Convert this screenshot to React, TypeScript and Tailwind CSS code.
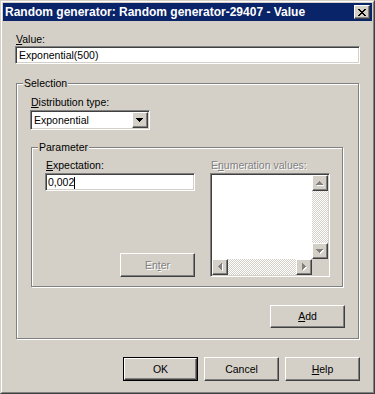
import React from "react";

const raised =
  "border border-t-white border-l-white border-r-[#404040] border-b-[#404040] bg-[#d4d0c8] shadow-[inset_-1px_-1px_0_#808080]";
const sunken =
  "border border-t-[#808080] border-l-[#808080] border-r-white border-b-white bg-white p-[1px] shadow-[inset_1px_1px_0_#404040,inset_-1px_-1px_0_#d4d0c8]";
const checker =
  "bg-[image:repeating-conic-gradient(#ffffff_0%_25%,#d4d0c8_0%_50%)] bg-[length:2px_2px]";
const dim = "text-[#808080] [text-shadow:1px_1px_0_#ffffff]";
const group =
  "flex flex-col border border-[#808080] shadow-[1px_1px_0_#ffffff,inset_1px_1px_0_#ffffff]";

type Dir = "up" | "down" | "left" | "right";

// 7px classic arrow glyph drawn pixel by pixel
function Arrow({ dir, color }: { dir: Dir; color: string }) {
  const rects: [number, number, number, number][] = [];
  for (let i = 0; i < 4; i++) {
    if (dir === "up") rects.push([3 - i, i, 2 * i + 1, 1]);
    if (dir === "down") rects.push([i, i, 7 - 2 * i, 1]);
    if (dir === "left") rects.push([i, 3 - i, 1, 2 * i + 1]);
    if (dir === "right") rects.push([i, i, 1, 7 - 2 * i]);
  }
  const w = dir === "up" || dir === "down" ? 7 : 4;
  const h = dir === "up" || dir === "down" ? 4 : 7;
  return (
    <svg width={w + 1} height={h + 1} shapeRendering="crispEdges">
      {color !== "#000000" &&
        rects.map((r, i) => (
          <rect key={"s" + i} x={r[0] + 1} y={r[1] + 1} width={r[2]} height={r[3]} fill="#ffffff" />
        ))}
      {rects.map((r, i) => (
        <rect key={i} x={r[0]} y={r[1]} width={r[2]} height={r[3]} fill={color} />
      ))}
    </svg>
  );
}

function ScrollBtn({ dir }: { dir: Dir }) {
  return (
    <div className={`flex h-[16px] w-[16px] shrink-0 items-center justify-center ${raised}`}>
      <Arrow dir={dir} color="#808080" />
    </div>
  );
}

function CloseGlyph() {
  const rows = ["11000011", "01100110", "00111100", "00011000", "00111100", "01100110", "11000011"];
  return (
    <svg width="8" height="7" shapeRendering="crispEdges">
      {rows.flatMap((row, y) =>
        row.split("").map((c, x) => (c === "1" ? <rect key={`${x}-${y}`} x={x} y={y} width="1" height="1" fill="#000" /> : null)),
      )}
    </svg>
  );
}

function Button({ children, isDefault }: { children: React.ReactNode; isDefault?: boolean }) {
  if (isDefault) {
    return (
      <div className="h-[24px] w-[75px] border border-black">
        <div className={`flex h-full w-full items-center justify-center ${raised}`}>{children}</div>
      </div>
    );
  }
  return <div className={`flex h-[24px] w-[75px] items-center justify-center ${raised}`}>{children}</div>;
}

export default function App() {
  return (
    <div className="h-[394px] w-[375px] border border-t-[#d4d0c8] border-l-[#d4d0c8] border-r-[#404040] border-b-[#404040] bg-[#d4d0c8] font-['Liberation_Sans',Arial,sans-serif] text-[10.5px] leading-[13px] text-black">
      <div className="flex h-full flex-col border border-t-white border-l-white border-r-[#808080] border-b-[#808080] p-[1px]">
        {/* caption */}
        <div className="flex h-[18px] shrink-0 items-center justify-between bg-[#0a246a] pl-[2px] pr-[2px]">
          <span className="text-[12px] font-bold leading-[13px] text-white">
            Random generator: Random generator-29407 - Value
          </span>
          <div className={`flex h-[14px] w-[16px] items-center justify-center ${raised}`}>
            <CloseGlyph />
          </div>
        </div>

        <div className="flex flex-1 flex-col px-[12px] pt-[12px]">
          <div className="h-[13px] pl-[1px]">
            <u>V</u>alue:
          </div>
          <div className={`h-[18px] w-full ${sunken}`}>
            <div className="pl-[2px] pt-[1px]">Exponential(500)</div>
          </div>

          {/* Selection */}
          <div className={`ml-[1px] mt-[19px] w-[343px] px-[13px] pb-[10px] ${group}`}>
            <div className="-ml-[7px] -mt-[7px] h-[13px] w-fit bg-[#d4d0c8] px-[1px]">Selection</div>
            <div className="mt-[6px] h-[13px] pl-[1px]">
              <u>D</u>istribution type:
            </div>
            <div className={`mt-[1px] flex h-[20px] w-[120px] ${sunken}`}>
              <div className="flex-1 pl-[2px] pt-[2px]">Exponential</div>
              <div className={`flex h-[16px] w-[16px] items-center justify-center ${raised}`}>
                <Arrow dir="down" color="#000000" />
              </div>
            </div>

            {/* Parameter */}
            <div className={`ml-[1px] mt-[17px] w-[312px] pb-[9px] pl-[13px] pr-[12px] ${group}`}>
              <div className="-ml-[7px] -mt-[7px] h-[13px] w-fit bg-[#d4d0c8] px-[1px]">Parameter</div>
              <div className="mt-[5px] flex gap-[15px]">
                <div className="flex w-[150px] flex-col">
                  <div className="h-[13px] pl-[1px]">
                    <u>E</u>xpectation:
                  </div>
                  <div className={`mt-[1px] h-[18px] ${sunken}`}>
                    <div className="flex items-center pl-[1px] pt-[1px]">
                      0,002
                      <span className="inline-block h-[12px] w-[1px] bg-black" />
                    </div>
                  </div>
                  <div className={`mt-auto flex h-[24px] w-[75px] items-center justify-center self-end ${raised} ${dim}`}>
                    <span>
                      En<u>t</u>er
                    </span>
                  </div>
                </div>
                <div className="flex w-[120px] flex-col">
                  <div className={`h-[13px] pl-[1px] ${dim}`}>
                    E<u>n</u>umeration values:
                  </div>
                  <div className={`mt-[1px] flex h-[104px] flex-col ${sunken}`}>
                    <div className="flex min-h-0 flex-1">
                      <div className="flex-1 bg-white" />
                      <div className="flex w-[16px] flex-col">
                        <ScrollBtn dir="up" />
                        <div className={`flex-1 ${checker}`} />
                        <ScrollBtn dir="down" />
                      </div>
                    </div>
                    <div className="flex h-[16px]">
                      <ScrollBtn dir="left" />
                      <div className={`flex-1 ${checker}`} />
                      <ScrollBtn dir="right" />
                      <div className="w-[16px] bg-[#d4d0c8]" />
                    </div>
                  </div>
                </div>
              </div>
            </div>

            <div className={`mt-[18px] flex h-[23px] w-[75px] items-center justify-center self-end ${raised}`}>
              <span>
                <u>A</u>dd
              </span>
            </div>
          </div>

          <div className="mt-[18px] flex justify-end gap-[6px]">
            <Button isDefault>OK</Button>
            <Button>Cancel</Button>
            <Button>
              <span>
                <u>H</u>elp
              </span>
            </Button>
          </div>
        </div>
      </div>
    </div>
  );
}
